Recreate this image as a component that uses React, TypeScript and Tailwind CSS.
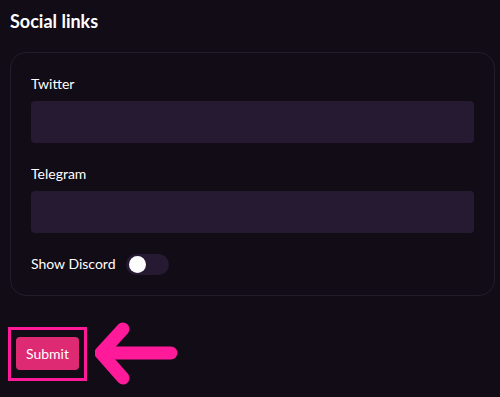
import * as React from "react";

export default function App() {
  const [discord, setDiscord] = React.useState(false);

  return (
    <div
      className="min-h-[397px] w-[500px] bg-[#120c17] pt-[9px] text-white"
      style={{ fontFamily: "Lato, 'Noto Sans', sans-serif" }}
    >
      <h2 className="ml-[10px] text-[18px] font-bold leading-[24px]">Social links</h2>

      <div className="mt-[19px] ml-[10px] mr-[5px] rounded-[16px] border border-[#231c2b] px-[20px] pt-[21px] pb-[20px]">
        <label className="block text-[14px] leading-[20px]" htmlFor="twitter">
          Twitter
        </label>
        <input
          id="twitter"
          autoComplete="off"
          className="mt-[7px] block h-[42px] w-full rounded-[4px] bg-[#261a33] px-3 text-[14px] outline-none"
        />

        <label className="mt-[21px] block text-[14px] leading-[20px]" htmlFor="telegram">
          Telegram
        </label>
        <input
          id="telegram"
          autoComplete="off"
          className="mt-[7px] block h-[42px] w-full rounded-[4px] bg-[#261a33] px-3 text-[14px] outline-none"
        />

        <div className="mt-[20px] flex h-[22px] items-center gap-[10px]">
          <span className="text-[14px] leading-[20px]">Show Discord</span>
          <button
            type="button"
            onClick={() => setDiscord(!discord)}
            className="flex h-[21px] w-[43px] items-center rounded-full bg-[#261a33] px-[3px]"
          >
            <span
              className={
                discord
                  ? "ml-auto block h-[17px] w-[17px] rounded-full bg-white"
                  : "block h-[17px] w-[17px] rounded-full bg-white"
              }
            />
          </button>
        </div>
      </div>

      <div className="mt-[31px] ml-[8px] flex items-start gap-[8px]">
        <div className="border-[3px] border-[#ff1a9a] px-[5px] pt-[7px] pb-[8px]">
          <button
            type="submit"
            className="block h-[33px] w-[63px] rounded-[4px] bg-[#de2a72] text-[14px] text-white"
          >
            Submit
          </button>
        </div>
        <svg width="85" height="66" viewBox="0 0 85 66" className="mt-[-5px]">
          <g
            stroke="#ff1a9a"
            strokeWidth="13"
            strokeLinecap="round"
            strokeLinejoin="round"
            fill="none"
          >
            <path d="M76 31 H8" />
            <path d="M28 7 L6 31 L28 56" />
          </g>
        </svg>
      </div>
    </div>
  );
}
